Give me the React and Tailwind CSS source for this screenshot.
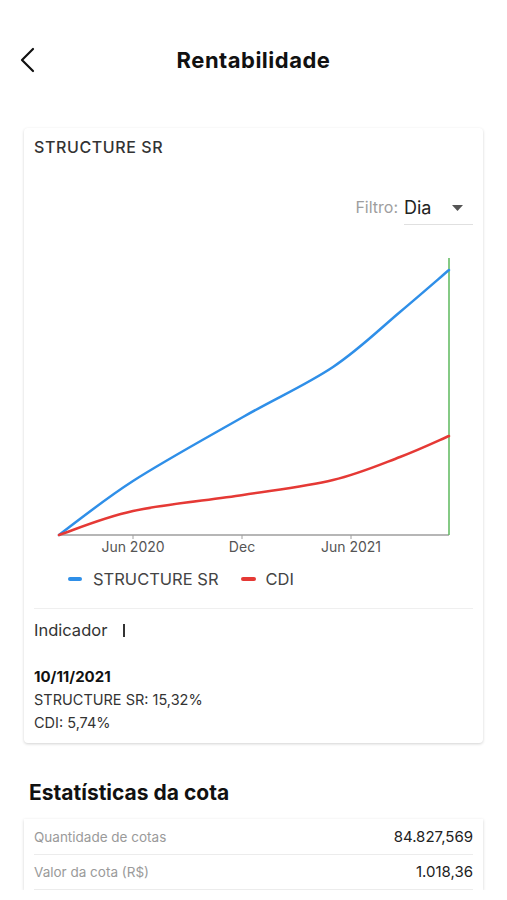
import React from "react";

const font = { fontFamily: "Inter, 'Noto Sans', sans-serif" };

// points read off the reference chart, in svg coordinates
const bluePts = [
  [25, 286], [99, 232], [209, 168], [299, 118], [366, 63], [415, 21],
];
const redPts = [
  [25, 286], [99, 262], [209, 246], [299, 231], [366, 208], [415, 187],
];

// catmull-rom -> cubic bezier
function smooth(pts) {
  let d = `M${pts[0][0]} ${pts[0][1]}`;
  for (let i = 0; i < pts.length - 1; i++) {
    const p0 = pts[i - 1] || pts[i];
    const p1 = pts[i];
    const p2 = pts[i + 1];
    const p3 = pts[i + 2] || p2;
    const c1x = p1[0] + (p2[0] - p0[0]) / 6;
    const c1y = p1[1] + (p2[1] - p0[1]) / 6;
    const c2x = p2[0] - (p3[0] - p1[0]) / 6;
    const c2y = p2[1] - (p3[1] - p1[1]) / 6;
    d += ` C${c1x.toFixed(1)} ${c1y.toFixed(1)} ${c2x.toFixed(1)} ${c2y.toFixed(1)} ${p2[0]} ${p2[1]}`;
  }
  return d;
}

function Chart() {
  return (
    <svg width="439" height="310" className="block">
      <line x1="25" y1="286" x2="415" y2="286" stroke="#9e9e9e" strokeWidth="1.5" />
      <line x1="415" y1="9" x2="415" y2="286" stroke="#5cb85c" strokeWidth="1.5" />
      {[99, 208, 317].map((x) => (
        <line key={x} x1={x} y1="286" x2={x} y2="290" stroke="#9e9e9e" strokeWidth="1" />
      ))}
      <path d={smooth(bluePts)} fill="none" stroke="#2f8fe8" strokeWidth="2.5" strokeLinecap="round" />
      <path d={smooth(redPts)} fill="none" stroke="#e53935" strokeWidth="2.5" strokeLinecap="round" />
      <g fill="#555" fontSize="14" textAnchor="middle" style={font}>
        <text x="99" y="303">Jun 2020</text>
        <text x="208" y="303">Dec</text>
        <text x="317" y="303">Jun 2021</text>
      </g>
    </svg>
  );
}

function StatRow({ label, value }) {
  return (
    <div className="flex items-center justify-between h-[35px] border-b border-[#ececec]">
      <span className="text-[13.5px] text-[#9a9a9a]">{label}</span>
      <span className="text-[15px] text-[#222]">{value}</span>
    </div>
  );
}

export default function App() {
  return (
    <div className="h-[890px] overflow-hidden bg-white" style={font}>
      <div className="relative flex items-center justify-center h-[120px]">
        <svg className="absolute left-[18px] top-[47px]" width="20" height="26" viewBox="0 0 20 26">
          <path d="M15 2 L4 13 L15 24" fill="none" stroke="#111" strokeWidth="2.2" strokeLinecap="round" strokeLinejoin="round" />
        </svg>
        <h1 className="text-[22px] font-bold text-[#111] tracking-[0.5px]">Rentabilidade</h1>
      </div>

      <div className="mx-6 mt-2 rounded-[4px] bg-white shadow-[0_1px_3px_rgba(0,0,0,0.18)] px-[10px] pt-[9px] pb-[9px]">
        <div className="text-[16px] font-medium text-[#333] leading-5 tracking-[0.6px]">STRUCTURE SR</div>
        <div className="flex justify-end mt-[32px]">
          <div className="flex items-center">
            <span className="text-[16px] text-[#9e9e9e] mr-[6px]">Filtro:</span>
            <div className="flex items-center w-[69px] border-b border-[#e0e0e0] h-[36px] pt-[2px]">
              <span className="text-[18px] text-[#222]">Dia</span>
              <svg className="ml-[21px]" width="11" height="6" viewBox="0 0 11 6">
                <path d="M0 0 L11 0 L5.5 6 Z" fill="#555" />
              </svg>
            </div>
          </div>
        </div>
        <div className="mt-[24px]">
          <Chart />
        </div>
        <div className="flex items-center h-[20px] mt-[10px] pl-[34px] text-[16.5px] text-[#444]">
          <span className="w-[14px] h-[4px] rounded-full bg-[#2f8fe8]" />
          <span className="ml-[11px]">STRUCTURE SR</span>
          <span className="ml-[22px] w-[15px] h-[4px] rounded-full bg-[#e53935]" />
          <span className="ml-[10px]">CDI</span>
        </div>
        <div className="mt-[19px] border-t border-[#efefef]" />
        <div className="flex items-center h-[20px] mt-[11px] text-[16.5px] text-[#333]">
          <span>Indicador</span>
          <span className="ml-[16px] w-[2px] h-[13px] bg-[#333]" />
        </div>
        <div className="mt-[25px] text-[15px] font-bold text-[#111] leading-[23px]">10/11/2021</div>
        <div className="text-[14.5px] text-[#333] leading-[23px]">STRUCTURE SR: 15,32%</div>
        <div className="text-[14.5px] text-[#333] leading-[23px]">CDI: 5,74%</div>
      </div>

      <h2 className="mt-[38px] ml-[29px] text-[21px] font-bold text-[#111] leading-6">Estatísticas da cota</h2>

      <div className="mx-6 mt-[14px] bg-white shadow-[0_1px_3px_rgba(0,0,0,0.18)] px-[10px] pt-[1px]">
        <StatRow label="Quantidade de cotas" value="84.827,569" />
        <StatRow label="Valor da cota (R$)" value="1.018,36" />
      </div>
    </div>
  );
}
